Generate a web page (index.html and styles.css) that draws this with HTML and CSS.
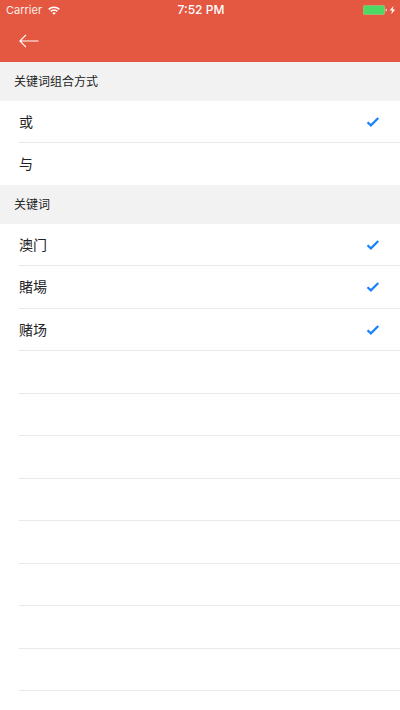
FILE: index.html
```
<!DOCTYPE html>
<html lang="zh-CN">
<head>
<meta charset="utf-8">
<meta name="viewport" content="width=device-width, initial-scale=1">
<title>关键词</title>
<link rel="stylesheet" href="styles.css">
</head>
<body>
<svg class="sprite" aria-hidden="true">
  <symbol id="check" viewBox="0 0 14 12"><path d="M1.5 6.2 4.9 9.4 12.3 2" fill="none" stroke="currentColor" stroke-width="2.2"/></symbol>
</svg>
<header class="top">
  <div class="status">
    <div class="carrier">
      <span>Carrier</span>
      <svg class="wifi" viewBox="0 0 12 9" aria-hidden="true">
        <g fill="none" stroke="currentColor" stroke-width="1.6"><path d="M.7 3.4C3.6.5 8.4.5 11.3 3.4"/><path d="M2.7 5.4c1.8-1.8 4.8-1.8 6.6 0"/></g>
        <path d="M4.2 6.9c1-1 2.6-1 3.6 0L6 8.8z" fill="currentColor"/>
      </svg>
    </div>
    <time class="clock">7:52 PM</time>
    <div class="power">
      <svg class="battery" viewBox="0 0 33 10" aria-hidden="true">
        <rect x=".4" y=".4" width="21.2" height="9.2" rx="1.4" fill="#4cd964" stroke="#a9c58a" stroke-width=".7"/>
        <path d="M22.7 3.4c1.5.4 1.5 2.8 0 3.2z" fill="#fff"/>
        <path d="M30.6.8 26.8 5.6h2.4L28.2 9.2 32.2 4.4h-2.6z" fill="#fff"/>
      </svg>
    </div>
  </div>
  <nav class="nav">
    <button class="back" type="button" aria-label="返回">
      <svg viewBox="0 0 20 14" aria-hidden="true"><path d="M7 .8.9 7 7 13.2M1 7h18.5" fill="none" stroke="currentColor" stroke-width="1.2"/></svg>
    </button>
  </nav>
</header>
<main class="content">
  <h2 class="heading">关键词组合方式</h2>
  <div class="modes">
    <label class="row"><span>或</span><input type="radio" name="mode" checked><svg class="tick" aria-hidden="true"><use href="#check"/></svg></label>
    <label class="row"><span>与</span><input type="radio" name="mode"><svg class="tick" aria-hidden="true"><use href="#check"/></svg></label>
  </div>
  <h2 class="heading">关键词</h2>
  <div class="keywords">
    <label class="row"><span>澳门</span><input type="checkbox" checked><svg class="tick" aria-hidden="true"><use href="#check"/></svg></label>
    <label class="row"><span>賭場</span><input type="checkbox" checked><svg class="tick" aria-hidden="true"><use href="#check"/></svg></label>
    <label class="row"><span>赌场</span><input type="checkbox" checked><svg class="tick" aria-hidden="true"><use href="#check"/></svg></label>
    <div class="row"></div>
    <div class="row"></div>
    <div class="row"></div>
    <div class="row"></div>
    <div class="row"></div>
    <div class="row"></div>
    <div class="row"></div>
    <div class="row"></div>
  </div>
</main>
</body>
</html>
```
FILE: styles.css
```
* {
  box-sizing: border-box;
}

body {
  margin: 0;
  min-height: 100vh;
  display: flex;
  flex-direction: column;
  background: #fff;
  color: #222;
  font-family: "Liberation Sans", "Noto Sans CJK SC", sans-serif;
}

.sprite {
  position: absolute;
  width: 0;
  height: 0;
}

.top {
  background: #e45741;
  color: #fff;
}

.status {
  display: grid;
  grid-template-columns: 1fr auto 1fr;
  align-items: center;
  height: 20px;
  padding: 0 4px 0 6px;
  font-family: Inter, "Liberation Sans", sans-serif;
  line-height: 20px;
}

.carrier {
  display: flex;
  align-items: center;
  gap: 6px;
  font-size: 11px;
  color: #fdeeeb;
}

.wifi {
  width: 12px;
  height: 9px;
  color: #fff;
}

.clock {
  font-size: 12px;
  font-weight: 500;
  color: #fff;
}

.power {
  display: flex;
  justify-content: flex-end;
}

.battery {
  width: 33px;
  height: 10px;
}

.nav {
  display: flex;
  align-items: center;
  height: 42px;
  padding: 0 12px;
}

.back {
  display: flex;
  padding: 8px 7px;
  border: 0;
  background: none;
  color: #fff;
}

.back svg {
  width: 20px;
  height: 14px;
}

.content {
  flex: 1;
  display: flex;
  flex-direction: column;
}

.heading {
  margin: 0;
  padding: 2px 14px 0;
  background: #f2f2f2;
  color: #222;
  font-size: 12px;
  font-weight: 400;
  line-height: 37px;
}

.row {
  display: flex;
  align-items: center;
  justify-content: space-between;
  min-height: 42px;
  margin-left: 19px;
  padding-right: 20px;
  border-bottom: 1px solid #e9e9e9;
  font-size: 14px;
  line-height: 20px;
}

.modes .row:last-child {
  border-bottom: 0;
}

.keywords {
  flex: 1;
  display: grid;
  grid-auto-rows: minmax(42px, 1fr);
  padding-bottom: 19px;
}

.row input {
  position: absolute;
  opacity: 0;
}

.tick {
  display: none;
  width: 14px;
  height: 12px;
  color: #1a82fb;
}

.row input:checked + .tick {
  display: block;
}
```
